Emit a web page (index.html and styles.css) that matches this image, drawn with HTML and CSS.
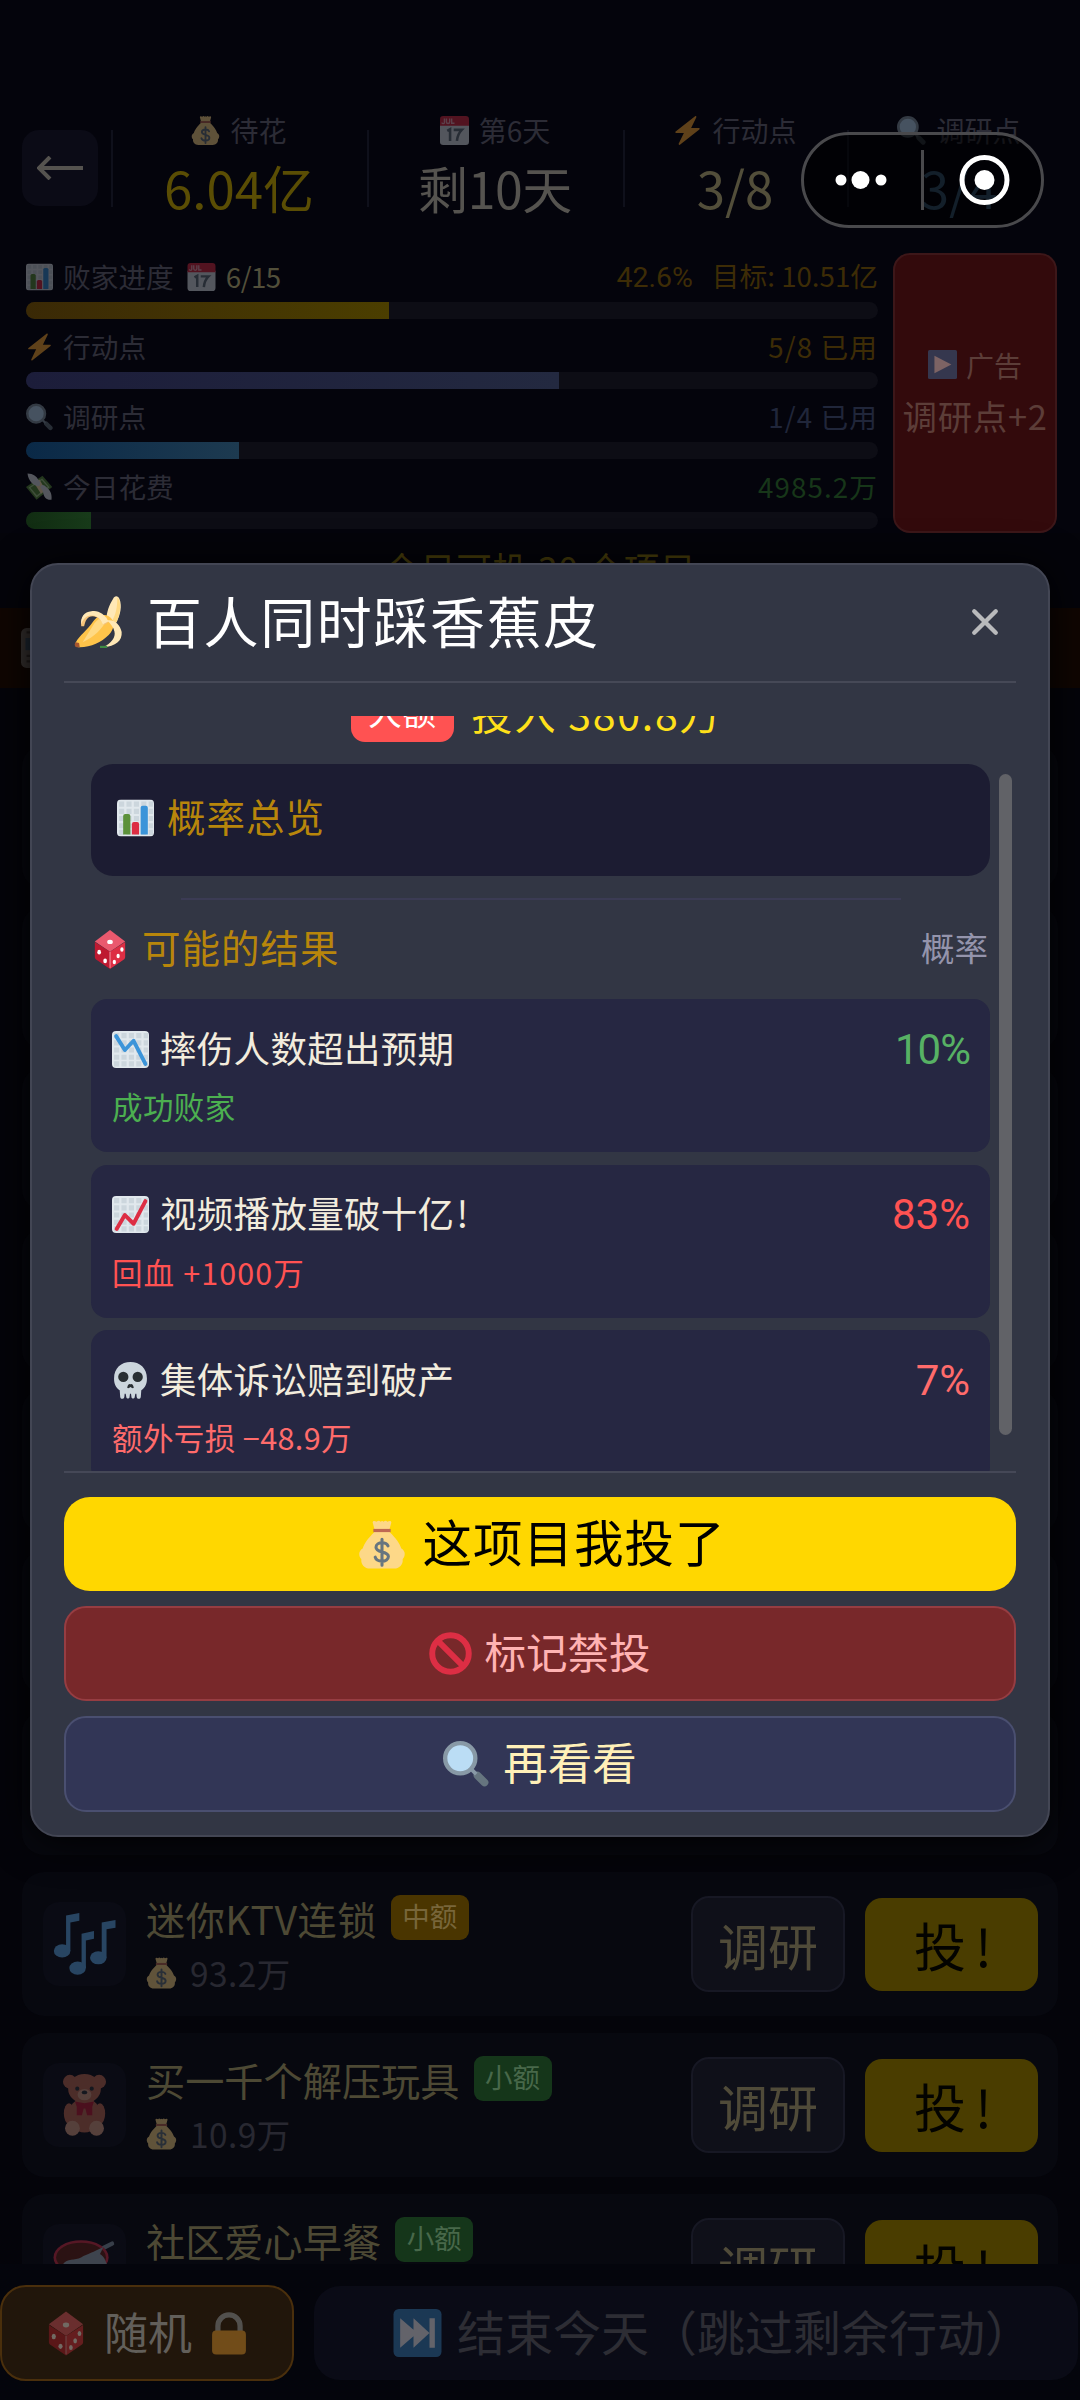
FILE: index.html
```html
<!DOCTYPE html>
<html lang="zh-CN">
<head>
<meta charset="utf-8">
<title>百人同时踩香蕉皮</title>
<link rel="stylesheet" href="styles.css">
</head>
<body>
<svg class="sprite" aria-hidden="true">
  <symbol id="bag" viewBox="0 0 36 36">
    <path fill="#FDD888" d="M12.500 8.500C7 14 5 17 3.500 21 0 23 .5 27 2.500 29 2 33 5 36 9 36h18c4 0 7-3 6.500-7 2-2 2.500-6-1-8-1.500-4-3.500-7-9-12.500z"/>
    <path fill="#FDD888" d="M11 1.500c0-1.500 1.500-1.500 3-.5 1-1.200 2-1.200 3 0 .8-.9 1.500-.9 2.200 0 1-1.200 2-1.200 2.800 0 1.500-1 3-1 3 .5L23.500 7h-11z"/>
    <path fill="#BF6952" d="M11.500 6.300h13v2.400h-13z"/>
    <path fill="none" stroke="#67757F" stroke-width="2.300" stroke-linecap="round" d="M22.500 19c-.8-1.800-2.500-2.300-4.500-2.300-2.400 0-4.500 1.200-4.500 3.300 0 4.800 9.300 2.300 9.300 7 0 2.200-2.200 3.500-4.800 3.500-2.500 0-4.500-.8-5.100-3M18 14v19.500"/>
  </symbol>
  <symbol id="calendar" viewBox="0 0 36 36">
    <path fill="#E0E7EC" d="M0 10h36v22a4 4 0 0 1-4 4H4a4 4 0 0 1-4-4z"/>
    <path fill="#DD2E44" d="M4 0h28a4 4 0 0 1 4 4v8H0V4a4 4 0 0 1 4-4z"/>
    <path fill="none" stroke="#F4ABBA" stroke-width="1.700" d="M5.500 3v5c0 2-3 2-3 0M8 3v4.500c0 2.500 4 2.500 4 0V3M14.500 3v6H18"/>
    <path fill="none" stroke="#66757F" stroke-width="3.200" d="M9 18.500l3.500-2V31M17 17.200h10c-4 4-5.500 8-6 13.800"/>
  </symbol>
  <symbol id="bolt" viewBox="0 0 36 36">
    <path fill="#FFAC33" d="M32.900 15.300c-.2-.2-.5-.3-.9-.3h-9.500L29 1.500c.3-.8-.7-1.900-1.600-1.200L3.300 19.300c-.9.600-.5 1.700.7 1.700h9.500L7 34.500c-.3.800.7 1.900 1.600 1.200l24.100-19c.5-.4.500-1 .2-1.400z"/>
  </symbol>
  <symbol id="lens" viewBox="0 0 36 36">
    <path stroke="#66757F" stroke-width="6" stroke-linecap="round" d="M27 27l5.500 5.500"/>
    <path stroke="#8899A6" stroke-width="3" d="M21 21l5 5"/>
    <circle cx="13.500" cy="13.500" r="11.800" fill="#BBDDF5" stroke="#8899A6" stroke-width="3.400"/>
  </symbol>
  <symbol id="grid" viewBox="0 0 36 36">
    <rect width="36" height="36" rx="4" fill="#E1E8ED"/>
    <path stroke="#CCD6DD" stroke-width="5" stroke-dasharray="5 2.200" d="M2 4.500h33M2 11.500h33M2 18.500h33M2 25.500h33M2 32h33"/>
  </symbol>
  <symbol id="bars" viewBox="0 0 36 36">
    <use href="#grid"/>
    <path fill="#5C913B" d="M6 16a2 2 0 0 1 2-2h3a2 2 0 0 1 2 2v18H6z"/>
    <path fill="#DD2E44" d="M14.500 24a2 2 0 0 1 2-2h3a2 2 0 0 1 2 2v10h-7z"/>
    <path fill="#3B94D9" d="M23 8a2 2 0 0 1 2-2h3a2 2 0 0 1 2 2v26h-7z"/>
  </symbol>
  <symbol id="down" viewBox="0 0 36 36">
    <use href="#grid"/>
    <path fill="none" stroke="#3B94D9" stroke-width="3.800" stroke-linecap="round" stroke-linejoin="round" d="M4 5l8.500 13.500L21 9.500 32.500 32"/>
  </symbol>
  <symbol id="up" viewBox="0 0 36 36">
    <use href="#grid"/>
    <path fill="none" stroke="#DD2E44" stroke-width="3.800" stroke-linecap="round" stroke-linejoin="round" d="M4.500 32l8-13.500L21 27 32.500 5"/>
  </symbol>
  <symbol id="cash" viewBox="0 0 36 36">
    <path fill="#5C913B" d="M0 18L22 3l13 15-21 17z"/>
    <path fill="#A7D28B" d="M3.500 18.500L21.500 6.500l10 11.700L14 32z"/>
    <path fill="#5C913B" d="M6 19L21 9l8 9-14.500 11z"/>
    <path fill="#FFE8B6" d="M11 13l7-5 8 14-6 5z"/>
    <path fill="#E1E8ED" d="M2 0c8 0 12 4 15 9 3 4 2 7 0 8C9 16 3 9 2 0zM34 35c-6 1-10-3-11-9-.5-4-3-6-4-8 2-4 5-3 8 0 5 4 8 9 7 17z"/>
  </symbol>
  <symbol id="play" viewBox="0 0 36 36">
    <rect width="36" height="36" rx="2" fill="#3B88C3"/><path fill="#fff" d="M8 7l21 11L8 29z"/>
  </symbol>
  <symbol id="next" viewBox="0 0 36 36">
    <rect width="36" height="36" rx="4" fill="#3B88C3"/><path fill="#fff" d="M5 7l10 8.500V7l12 11-12 11v-8.500L5 29zM27 7h4v22h-4z"/>
  </symbol>
  <symbol id="dice" viewBox="0 0 36 36">
    <path fill="#EA596E" d="M18 0L32 10.500 18 20 4 10.500z"/>
    <path fill="#BE1931" d="M4 11l14 9v16L5.500 27.500C4.500 27 4 26 4 25z"/>
    <path fill="#DD2E44" d="M18 20l14-9v14c0 1-.5 2-1.500 2.500L18 36z"/>
    <path stroke="#F4ABBA" stroke-width=".8" d="M18 20v15"/>
    <g fill="#fff"><ellipse cx="18" cy="11" rx="2.600" ry="2"/><ellipse cx="8" cy="20.500" rx="1.700" ry="2.200"/><ellipse cx="13.500" cy="28.500" rx="1.700" ry="2.200"/><ellipse cx="22" cy="29.500" rx="1.500" ry="2.100"/><ellipse cx="25.500" cy="24" rx="1.500" ry="2.100"/><ellipse cx="29" cy="18" rx="1.500" ry="2.100"/></g>
  </symbol>
  <symbol id="skull" viewBox="0 0 36 36">
    <path fill="#CCD6DD" d="M34 16C34 6 27 0 18 0S2 6 2 16c0 5 1.500 9 5.500 11.500L8 34c.3 2.500 3.500 2.500 4 0l.3-3h1l.7 3.500c.4 1.500 2.600 1.500 3 0l.5-3.500h1l.5 3.500c.4 1.500 2.600 1.500 3 0l.7-3.500h1l.3 3c.5 2.500 3.700 2.500 4 0l.5-6.500C32.500 25 34 21 34 16z"/>
    <g fill="#292F33"><circle cx="11" cy="14.500" r="5"/><circle cx="25" cy="14.500" r="5"/><path d="M14.800 25c.4-2.500 1.500-3.500 2.500-3.500.5 0 .7.500.7.500s.2-.5.700-.5c1 0 2.100 1 2.500 3.500-.8 1-2.500 0-3.200-.6-.7.600-2.400 1.600-3.200.6z"/></g>
  </symbol>
  <symbol id="banana" viewBox="0 0 36 36">
    <path fill="#FFE8B6" d="M27 2c1-2.500 3.500-2.500 4.500 0 2 5 .5 11-2 16l-7-2c0-5 2-10 4.500-14z"/>
    <path fill="#FFD983" d="M31 2c2 5 .5 12-2 17l-3-1c3-5 4-10 4-17z"/>
    <path fill="#FFC44A" d="M1 32.500C4 27 9 24 13 18c3-4 7-6 11-4 5 3 4 9 0 13-5 5-12 8.500-20 8.500-2.500 0-4-1-3-3z"/>
    <path fill="#FFD983" d="M14 19c3-4 6-5 9-4-3 8-9 13-17 17z"/>
    <path fill="#F4C27A" d="M5 21c-1-7 4-11 10-10 4 .7 7 4 9 7l-3 2c-2-3-5-6-8-6-4 0-5 3-6 7z"/>
    <path fill="#FFE8B6" d="M5 19.500c2-6 7-7 11-5 2 1 3 3 4 5l4-2c-3-5-7-8-12-7-5 .5-7.500 4-7 9z"/>
    <path fill="#FFE8B6" d="M23 17c5-1 9 3 10 8 .5 6-4 10-13 10.500 6-3 9-7 8-11-.7-3-2.500-5-5-7.500z"/>
    <path fill="#A6562F" d="M1.200 32l2.300.5.500 3H2c-1.600-.5-2-2-.8-3.500z"/><path fill="#3E8A43" d="M18 34.500h5v1.500h-5z"/>
  </symbol>
  <symbol id="ban" viewBox="0 0 36 36">
    <circle cx="18" cy="18" r="15.300" fill="none" stroke="#DD2E44" stroke-width="5"/><path stroke="#DD2E44" stroke-width="5" d="M7 7l22 22"/>
  </symbol>
  <symbol id="notes" viewBox="0 0 36 36">
    <g fill="#5DADEC"><ellipse cx="5" cy="22" rx="4.800" ry="3.800"/><ellipse cx="14" cy="32" rx="4.800" ry="3.800"/><ellipse cx="26" cy="26" rx="4.800" ry="3.800"/><path d="M7.300 1.500L15 0v4.500l-5.200 1V22H7.300zM16.300 12l7.200-1.500V15l-4.700 1v16h-2.500zM28 5.500L36 4v4.500l-5.200 1V26H28z"/></g>
  </symbol>
  <symbol id="bear" viewBox="0 0 36 36">
    <g fill="#C1694F"><circle cx="9.500" cy="4.500" r="4"/><circle cx="26.500" cy="4.500" r="4"/><ellipse cx="18" cy="8.500" rx="9.500" ry="8.500"/><ellipse cx="18" cy="24" rx="9.500" ry="10"/><ellipse cx="9" cy="23" rx="3" ry="6"/><ellipse cx="27" cy="23" rx="3" ry="6"/></g>
    <g fill="#D99E82"><circle cx="11" cy="31.500" r="4.300"/><circle cx="25" cy="31.500" r="4.300"/><ellipse cx="18" cy="12" rx="4" ry="3.300"/></g>
    <path fill="#BE1931" d="M12.500 16l5.500 1 5.500-1-1 3v5h-3l-1-4h-1l-1 4h-3v-5z"/>
    <g fill="#292F33"><circle cx="13.800" cy="8.500" r="1.200"/><circle cx="22.200" cy="8.500" r="1.200"/><ellipse cx="18" cy="10.700" rx="1.600" ry="1.100"/></g>
  </symbol>
  <symbol id="bowl" viewBox="0 0 36 36">
    <path stroke="#8899A6" stroke-width="2.500" stroke-linecap="round" d="M24 10l10-5"/>
    <ellipse cx="16" cy="13" rx="16" ry="10" fill="#DD2E44"/><ellipse cx="16" cy="13" rx="14.500" ry="8.500" fill="#662113"/>
    <path fill="#9AAAB4" d="M5 18c2-5 7-3 11-5s7-3 13-6l-2 4c3 2 3 4 4 6l-12 5z"/>
  </symbol>
  <symbol id="lock" viewBox="0 0 36 36">
    <path fill="none" stroke="#AAB8C2" stroke-width="4.500" d="M8.500 20v-8.500a9.500 9.500 0 0 1 19 0V20"/><rect x="3.500" y="15.500" width="29" height="20.500" rx="3.500" fill="#FFAC33"/>
  </symbol>
  <symbol id="phone" viewBox="0 0 36 36">
    <rect width="36" height="36" rx="5" fill="#CCD6DD"/><path fill="#55acee" d="M4 9h26v11H4z"/><path stroke="#66757f" stroke-width="2" d="M5 4h26M5 25h26M5 30h26"/>
  </symbol>
</svg>

<main class="game">
  <header class="topbar">
    <button class="back"><svg viewBox="0 0 46 24"><path d="M46 12H3M13 1L2 12l11 11"/></svg></button>
    <div class="stat wide"><div class="stat-name"><svg class="ico"><use href="#bag"/></svg>待花</div><div class="stat-value gold">6.04亿</div></div>
    <div class="stat wide"><div class="stat-name"><svg class="ico"><use href="#calendar"/></svg>第6天</div><div class="stat-value left-days">剩10天</div></div>
    <div class="stat"><div class="stat-name"><svg class="ico"><use href="#bolt"/></svg>行动点</div><div class="stat-value cream">3/8</div></div>
    <div class="stat"><div class="stat-name"><svg class="ico"><use href="#lens"/></svg>调研点</div><div class="stat-value blue">3/4</div></div>
  </header>

  <section class="progress">
    <div class="meters">
      <div class="meter">
        <div class="meter-head"><svg class="ico"><use href="#bars"/></svg><span>败家进度</span><svg class="ico day"><use href="#calendar"/></svg><span class="days">6/15</span><span class="amount amber"><span class="pc">42.6%</span>目标: 10.51亿</span></div>
        <div class="track"><div class="fill gold-fill" style="width:42.6%"></div></div>
      </div>
      <div class="meter">
        <div class="meter-head"><svg class="ico"><use href="#bolt"/></svg><span>行动点</span><span class="amount amber used">5/8 已用</span></div>
        <div class="track"><div class="fill violet-fill" style="width:62.5%"></div></div>
      </div>
      <div class="meter">
        <div class="meter-head"><svg class="ico"><use href="#lens"/></svg><span>调研点</span><span class="amount slate used">1/4 已用</span></div>
        <div class="track"><div class="fill blue-fill" style="width:25%"></div></div>
      </div>
      <div class="meter">
        <div class="meter-head"><svg class="ico"><use href="#cash"/></svg><span>今日花费</span><span class="amount green used">4985.2万</span></div>
        <div class="track"><div class="fill green-fill" style="width:7.6%"></div></div>
      </div>
    </div>
    <button class="ad"><span class="ad-top"><svg class="ico"><use href="#play"/></svg>广告</span><span class="ad-main">调研点+2</span></button>
  </section>

  <div class="count">今日可投 30 个项目</div>
  <div class="banner"><svg class="ico"><use href="#phone"/></svg></div>

  <section class="list">
    <article class="item"></article><article class="item"></article><article class="item"></article><article class="item"></article>
    <article class="item"></article><article class="item"></article><article class="item"></article>
    <article class="item">
      <div class="thumb"><svg class="ico"><use href="#notes"/></svg></div>
      <div class="info"><div class="name"><span class="latin">迷你KTV连锁</span><span class="tag mid">中额</span></div><div class="price"><svg class="ico"><use href="#bag"/></svg>93.2万</div></div>
      <button class="study">调研</button><button class="invest">投<i>!</i></button>
    </article>
    <article class="item">
      <div class="thumb"><svg class="ico"><use href="#bear"/></svg></div>
      <div class="info"><div class="name">买一千个解压玩具<span class="tag small">小额</span></div><div class="price"><svg class="ico"><use href="#bag"/></svg>10.9万</div></div>
      <button class="study">调研</button><button class="invest">投<i>!</i></button>
    </article>
    <article class="item">
      <div class="thumb"><svg class="ico"><use href="#bowl"/></svg></div>
      <div class="info"><div class="name">社区爱心早餐<span class="tag small">小额</span></div><div class="price"></div></div>
      <button class="study">调研</button><button class="invest">投<i>!</i></button>
    </article>
  </section>

  <footer class="actions">
    <button class="random"><svg class="ico"><use href="#dice"/></svg><span>随机</span><svg class="ico"><use href="#lock"/></svg></button>
    <button class="finish"><svg class="ico"><use href="#next"/></svg><span>结束今天（跳过剩余行动）</span></button>
  </footer>
</main>

<div class="overlay">
  <section class="modal">
    <header class="modal-head"><svg class="ico"><use href="#banana"/></svg><h1>百人同时踩香蕉皮</h1><button class="close"><svg viewBox="0 0 26 26"><path d="M3 3l20 20M23 3L3 23"/></svg></button></header>
    <div class="scroll">
      <div class="cost"><span class="level">大额</span><span class="sum">投入 380.8万</span></div>
      <div class="overview"><svg class="ico"><use href="#bars"/></svg><span>概率总览</span></div>
      <div class="rule"></div>
      <div class="outcomes-head"><svg class="ico"><use href="#dice"/></svg><span class="cap">可能的结果</span><span class="prob">概率</span></div>
      <div class="outcomes">
        <div class="outcome"><div class="line"><svg class="ico"><use href="#down"/></svg><span>摔伤人数超出预期</span><b class="ok">10%</b></div><div class="effect ok">成功败家</div></div>
        <div class="outcome"><div class="line"><svg class="ico"><use href="#up"/></svg><span>视频播放量破十亿<i>!</i></span><b class="bad">83%</b></div><div class="effect bad wide-num">回血 +1000万</div></div>
        <div class="outcome"><div class="line"><svg class="ico"><use href="#skull"/></svg><span>集体诉讼赔到破产</span><b class="loss">7%</b></div><div class="effect loss">额外亏损 −48.9万</div></div>
      </div>
      <div class="thumb-bar"></div>
    </div>
    <footer class="modal-foot">
      <button class="btn go"><svg class="ico"><use href="#bag"/></svg><span>这项目我投了</span></button>
      <button class="btn block"><svg class="ico"><use href="#ban"/></svg><span>标记禁投</span></button>
      <button class="btn look"><svg class="ico"><use href="#lens"/></svg><span>再看看</span></button>
    </footer>
  </section>
</div>

<div class="capsule">
  <svg viewBox="0 0 243 96"><g fill="#fff"><circle cx="40" cy="48" r="5.500"/><circle cx="59.500" cy="48" r="9"/><circle cx="80" cy="48" r="5.500"/><circle cx="183.500" cy="48" r="10"/></g><path stroke="#49494c" stroke-width="3" d="M121.500 18v60"/><circle cx="183.500" cy="48" r="22.500" fill="none" stroke="#fff" stroke-width="5"/></svg>
</div>
</body>
</html>
```
FILE: styles.css
```css
* { box-sizing: border-box; }
body {
  margin: 0;
  position: relative;
  width: 1080px;
  height: 2400px;
  overflow: hidden;
  background: #04040a;
  font-family: "Noto Sans CJK SC", sans-serif;
  font-weight: 400;
}
button { border: 0; padding: 0; background: none; font: inherit; color: inherit; }
.sprite { position: absolute; width: 0; height: 0; }
.ico { flex: none; width: 29px; height: 29px; display: block; }
i { font-style: normal; }

/* Dimmed game screen */
.game { display: flex; flex-direction: column; height: 2400px; }
.game .ico { opacity: .36; }

.topbar { display: flex; align-items: flex-start; height: 228px; padding: 108px 8px 0 22px; background: #04040c; }
.back { width: 76px; height: 76px; margin: 22px 13px 0 0; border-radius: 17px; background: #0b0b16; display: flex; align-items: center; justify-content: center; }
.back svg { width: 46px; height: 24px; fill: none; stroke: #55534f; stroke-width: 4; }
.stat { width: 224px; height: 120px; padding-top: 6px; display: flex; flex-direction: column; align-items: center; background: linear-gradient(#0f101b, #0f101b) 0 22px / 2px 77px no-repeat; }
.stat.wide { width: 256px; }
.stat-name { display: flex; align-items: center; gap: 10px; height: 32px; line-height: 30px; font-size: 28px; color: #2c2c36; }
.stat-value { margin-top: 11px; height: 60px; line-height: 60px; font-size: 51px; color: #55534f; }
.stat-value.left-days { font-size: 50px; letter-spacing: -.4px; }
.gold { color: #5a4d04; }
.cream { color: #524e3a; }
.blue { color: #2a455e; }

.progress { display: flex; gap: 15px; height: 305px; padding: 25px 23px 0 26px; background: #04040c; }
.meters { flex: 1; padding-top: 6px; }
.meter { height: 70px; }
.meter-head { display: flex; align-items: center; height: 36px; margin-bottom: 7px; line-height: 34px; font-size: 27.700px; color: #2c2c36; white-space: pre; }
.meter-head > span { margin-top: -2px; }
.meter-head .ico { width: 27px; height: 28px; margin-right: 10px; }
.meter-head .day { width: 29px; margin: 0 10px 0 13px; }
.days { color: #524f3a; letter-spacing: -.5px; }
.amount { margin-left: auto; }
.used { letter-spacing: 1.100px; }
.amber { color: #3d2c06; }
.slate { color: #20263a; }
.green { color: #173619; }
.pc { font-family: Roboto, sans-serif; font-size: 28.500px; margin-right: 19px; }
.track { height: 17px; border-radius: 9px; overflow: hidden; background: #0d0d15; }
.fill { height: 100%; }
.gold-fill { background: linear-gradient(90deg, #3a2906, #4b3e00); }
.violet-fill { background: linear-gradient(90deg, #1c1d3a, #232940); }
.blue-fill { background: linear-gradient(90deg, #0a2947, #1d3a50); }
.green-fill { background: linear-gradient(90deg, #112c12, #183b1a); }
.ad { width: 164px; height: 280px; border: 2px solid #3d1719; border-radius: 17px; background: #330a0c; color: #5c3d38; display: flex; flex-direction: column; align-items: center; justify-content: center; padding-bottom: 7px; }
.ad-top { display: flex; align-items: center; gap: 9px; font-size: 28px; line-height: 50px; }
.ad-main { font-size: 34.500px; line-height: 50px; letter-spacing: .6px; }

.count { height: 75px; line-height: 69px; text-align: center; font-size: 35.500px; letter-spacing: .8px; color: #4a3f0a; }
.banner { height: 80px; padding: 20px 21px; background: #100602; }
.banner .ico { width: 40px; height: 40px; opacity: .22; }

.list { flex: none; height: 1576px; overflow: hidden; padding: 57px 22px 0; display: flex; flex-direction: column; gap: 17px; }
.item { flex: none; height: 144px; border-radius: 22px; background: #07080f; display: flex; align-items: center; padding: 0 20px 0 21px; }
.thumb { width: 83px; height: 84px; border-radius: 16px; background: #0a0b14; display: flex; align-items: center; justify-content: center; }
.thumb .ico { width: 63px; height: 62px; }
.info { flex: 1; margin-left: 20px; }
.name { display: flex; align-items: center; height: 50px; line-height: 42px; font-size: 39.200px; color: #4d4934; }
.latin { letter-spacing: .5px; }
.tag { margin-left: 14px; width: 78px; height: 45px; margin-top: -1px; border-radius: 9px; text-align: center; line-height: 41px; font-size: 27.500px; }
.mid { background: #4a3500; color: #78663a; }
.small { background: #15361a; color: #48684a; }
.price { display: flex; align-items: center; gap: 13px; height: 44px; margin-top: 8px; line-height: 40px; font-size: 33.500px; letter-spacing: .4px; color: #282831; }
.price .ico { width: 31px; height: 34px; }
.study { width: 154px; height: 96px; border: 2px solid #171824; border-radius: 18px; background: #0f1019; color: #504b39; font-size: 50px; line-height: 86px; }
.invest { width: 173px; height: 93px; margin: 1px 0 0 20px; padding-left: 3px; border-radius: 17px; background: #4a3d00; color: #030300; font-size: 52px; line-height: 82px; }
.invest i { margin-left: 9px; }

.actions { flex: 1; display: flex; gap: 20px; padding-top: 21px; background: #04050c; }
.random, .finish { display: flex; align-items: center; justify-content: center; border-radius: 26px; }
.random { width: 294px; height: 96px; border: 2px solid #4a2f0c; background: #21160b; color: #625f5a; font-size: 44px; line-height: 86px; }
.random .ico { width: 44px; height: 45px; }
.random span { margin: -4px 16px 0 16px; }
.random .ico + span + .ico { width: 42px; height: 43px; }
.finish { width: 764px; height: 94px; margin-top: 1px; background: #0a0b16; color: #2d2d34; font-size: 48px; line-height: 86px; justify-content: flex-start; padding-left: 79px; }
.finish .ico { width: 49px; height: 48px; margin-right: 15px; }
.finish span { margin-top: -6px; white-space: nowrap; }

/* Project dialog */
.overlay { position: absolute; inset: 0; display: flex; align-items: center; justify-content: center; }
.modal { width: 1020px; height: 1274px; border: 2px solid #434654; border-radius: 28px; background: #323644; padding: 0 32px; box-shadow: 0 4px 40px #000; display: flex; flex-direction: column; }
.modal-head { flex: none; height: 118px; border-bottom: 2px solid #464957; display: flex; align-items: center; padding: 0 17px 2px 10px; }
.modal-head .ico { width: 52px; height: 56px; }
.modal-head h1 { margin: -7px 0 0 21px; font-size: 55px; letter-spacing: 1.600px; font-weight: 400; line-height: 80px; color: #fff; }
.close { margin-left: auto; width: 28px; height: 28px; }
.close svg { display: block; width: 28px; height: 28px; fill: none; stroke: #b9babc; stroke-width: 4; stroke-linecap: round; }

.scroll { flex: none; position: relative; height: 755px; margin-top: 33px; overflow: hidden; padding: 0 26px 0 27px; }
.cost { display: flex; align-items: center; justify-content: center; gap: 18px; height: 52px; margin: -26px 8px 22px 0; }
.level { width: 103px; height: 52px; border-radius: 14px; background: #ff5252; color: #fff; text-align: center; font-size: 34px; line-height: 42px; }
.sum { margin-top: -9px; color: #ffe01a; font-size: 41px; line-height: 44px; letter-spacing: 1.800px; }
.overview { display: flex; align-items: center; gap: 13px; height: 112px; padding: 0 26px 4px; border-radius: 22px; background: #1c1c32; color: #b8860b; font-size: 38.500px; letter-spacing: 1px; line-height: 50px; }
.overview .ico { width: 37px; height: 38px; }
.line span { margin-top: -3px; }
.overview span, .cap, .btn span { margin-top: -7px; }
.rule { height: 2px; width: 720px; margin: 22px auto 0; background: #3b3b54; }
.outcomes-head { display: flex; align-items: center; height: 99px; line-height: 50px; }
.outcomes-head .ico { width: 40px; height: 39px; margin-left: -1px; }
.cap { margin-left: 12px; color: #b8860b; font-size: 38.500px; letter-spacing: 1px; }
.prob { margin: -6px 2px 0 auto; color: #9494ac; font-size: 33.500px; }
.outcomes { display: flex; flex-direction: column; gap: 12.500px; }
.outcome { height: 153px; flex: none; padding: 28px 21px 0; border-radius: 16px; background: #262742; }
.line { display: flex; align-items: center; height: 44px; color: #f2ecdd; font-size: 36.500px; letter-spacing: .3px; line-height: 44px; }
.line .ico { width: 37px; height: 37px; margin-right: 11px; }
.line i { margin-left: 2px; }
.line b { margin: 1px -1px 0 auto; font-family: Roboto, sans-serif; font-weight: 400; font-size: 42px; letter-spacing: 0; }
.line b.ok { letter-spacing: -1px; }
.effect { height: 36px; margin-top: 17px; line-height: 36px; font-size: 30.500px; letter-spacing: .4px; }
.wide-num { letter-spacing: 1.100px; }
.ok { color: #4caf50; }
.line .ok { color: #57b164; }
.bad, .line .bad { color: #ff5252; }
.loss, .line .loss { color: #ff6b6b; }
.thumb-bar { position: absolute; right: 4px; top: 58px; width: 13px; height: 661px; border-radius: 7px; background: #616267; }

.modal-foot { flex: none; border-top: 2px solid #454857; padding-top: 24px; display: flex; flex-direction: column; gap: 15px; }
.btn { height: 95px; border-radius: 26px; display: flex; align-items: center; justify-content: center; }
.btn.go { background: #ffd700; color: #000; font-size: 49.500px; letter-spacing: 1px; height: 94px; padding-left: 3px; }
.go .ico { width: 48px; height: 53px; margin-right: 17px; }
.btn.block { background: #78282a; border: 2px solid #963d42; border-radius: 22px; color: #ffb3b3; font-size: 41.500px; }
.block .ico { width: 43px; height: 43px; margin-right: 12px; }
.btn.block span { margin-top: -5px; }
.btn.look { background: #323656; border: 2px solid #4a4f70; border-radius: 22px; color: #fff0b8; font-size: 44.500px; height: 96px; }
.look .ico { width: 46px; height: 46px; margin-right: 14px; }

/* Host app menu */
.capsule { position: absolute; left: 801px; top: 132px; width: 243px; height: 96px; border: 3px solid #49494c; border-radius: 48px; background: rgba(0, 0, 0, .55); }
.capsule svg { position: absolute; left: -3px; top: -3px; width: 243px; height: 96px; }
```
